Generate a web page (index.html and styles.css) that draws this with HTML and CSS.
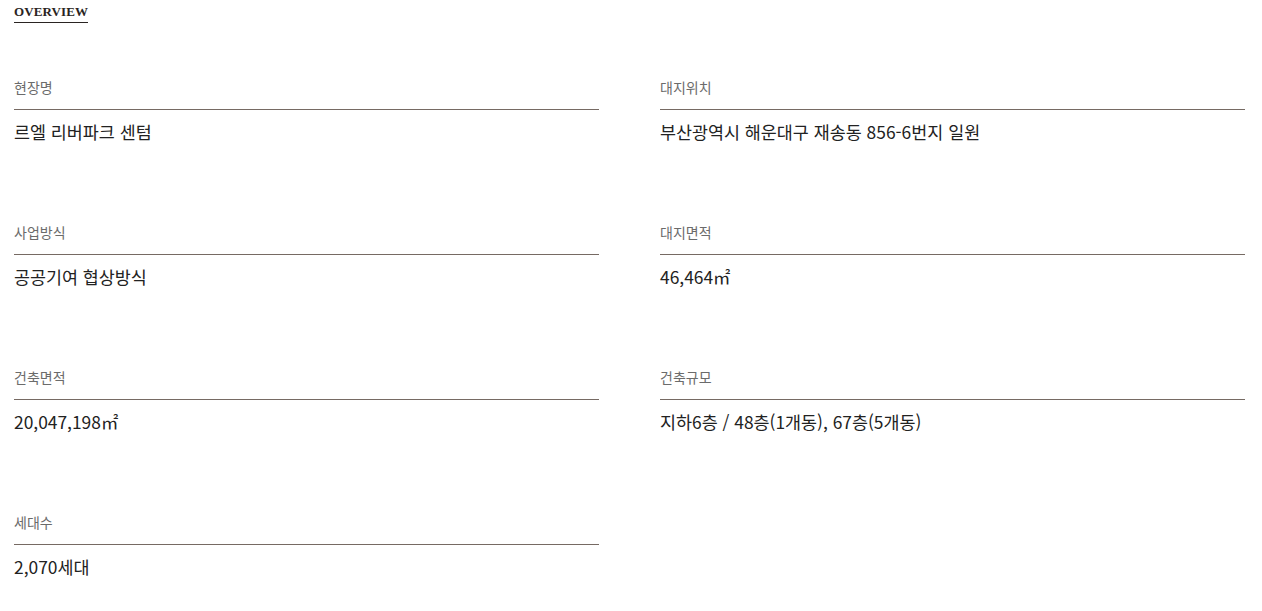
FILE: index.html
```html
<!DOCTYPE html>
<html lang="ko">
<head>
<meta charset="utf-8">
<link rel="stylesheet" href="styles.css">
</head>
<body>
<div class="page">
  <h2 class="title">OVERVIEW</h2>
  <div class="grid">
    <div class="item"><div class="label">현장명</div><div class="value">르엘 리버파크 센텀</div></div>
    <div class="item"><div class="label">대지위치</div><div class="value">부산광역시 해운대구 재송동 856-6번지 일원</div></div>
    <div class="item"><div class="label">사업방식</div><div class="value">공공기여 협상방식</div></div>
    <div class="item"><div class="label">대지면적</div><div class="value">46,464㎡</div></div>
    <div class="item"><div class="label">건축면적</div><div class="value">20,047,198㎡</div></div>
    <div class="item"><div class="label">건축규모</div><div class="value">지하6층 / 48층(1개동), 67층(5개동)</div></div>
    <div class="item"><div class="label">세대수</div><div class="value">2,070세대</div></div>
  </div>
</div>
</body>
</html>
```
FILE: styles.css
```css
html, body {
  margin: 0;
  padding: 0;
  background: #fff;
}
.page {
  padding: 5px 18px 0 14px;
  font-family: "Noto Sans CJK KR", "Noto Sans", sans-serif;
}
.title {
  display: block;
  width: fit-content;
  margin: 0;
  font-family: "Liberation Serif", serif;
  font-weight: 600;
  font-size: 13px;
  line-height: 14px;
  letter-spacing: 0.1px;
  color: #2a2422;
  padding-bottom: 3px;
  border-bottom: 1px solid #2a2422;
}
.grid {
  display: grid;
  grid-template-columns: 585px 585px;
  column-gap: 61px;
  row-gap: 78px;
  margin-top: 54px;
}
.label {
  font-size: 14px;
  line-height: 20px;
  color: #6b6b6b;
  padding-bottom: 12px;
  border-bottom: 1px solid #766a63;
}
.value {
  margin-top: 10px;
  font-size: 17.4px;
  line-height: 24px;
  color: #222;
}
```
